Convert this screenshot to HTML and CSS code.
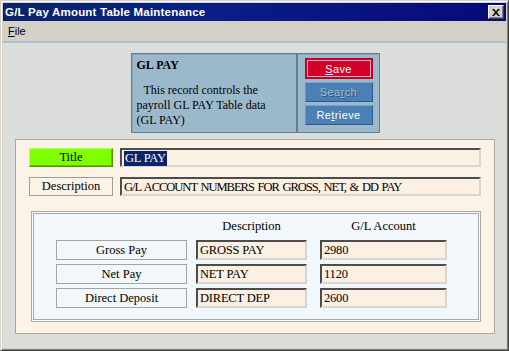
FILE: index.html
```html
<!DOCTYPE html>
<html lang="en">
<head>
    <meta charset="UTF-8">
    <title>G/L Pay Amount Table Maintenance</title>
    <link rel="stylesheet" href="styles.css">
</head>
<body>
    <div class="window">
        <div class="titlebar">
            <span class="title-text">G/L Pay Amount Table Maintenance</span>
            <button class="close-btn" title="Close">
                <svg width="8" height="7" viewBox="0 0 8 7">
                    <path d="M0 0h2l2 2.5L6 0h2L5 3.5 8 7H6L4 4.5 2 7H0l3-3.5z" fill="#000"/>
                </svg>
            </button>
        </div>

        <div class="menubar">
            <span class="menu-item"><u>F</u>ile</span>
        </div>

        <div class="client">
            <div class="record-box">
                <div class="record-info">
                    <h2>GL PAY</h2>
                    <p>This record controls the<br>payroll GL PAY Table data<br>(GL PAY)</p>
                </div>
                <div class="record-actions">
                    <button class="btn btn-save"><u>S</u>ave</button>
                    <button class="btn btn-disabled">Sea<u>r</u>ch</button>
                    <button class="btn">Re<u>t</u>rieve</button>
                </div>
            </div>

            <div class="main-panel">
                <div class="field-row">
                    <div class="lbl lbl-title">Title</div>
                    <div class="field field-wide"><span class="selected">GL PAY</span></div>
                </div>
                <div class="field-row">
                    <div class="lbl">Description</div>
                    <div class="field field-wide field-long">G/L ACCOUNT NUMBERS FOR GROSS, NET, &amp; DD PAY</div>
                </div>

                <div class="accounts">
                    <div class="accounts-grid">
                        <div></div>
                        <div class="col-head">Description</div>
                        <div class="col-head col-acct">G/L Account</div>

                        <div class="row-lbl">Gross Pay</div>
                        <div class="field">GROSS PAY</div>
                        <div class="field col-acct">2980</div>

                        <div class="row-lbl">Net Pay</div>
                        <div class="field">NET PAY</div>
                        <div class="field col-acct">1120</div>

                        <div class="row-lbl">Direct Deposit</div>
                        <div class="field">DIRECT DEP</div>
                        <div class="field col-acct">2600</div>
                    </div>
                </div>
            </div>
        </div>
    </div>
</body>
</html>
```

FILE: styles.css
```css
* {
    margin: 0;
    padding: 0;
    box-sizing: border-box;
}

body {
    font-family: 'Liberation Sans', Arial, sans-serif;
    background: #d4d0c8;
}

.window {
    width: 509px;
    height: 351px;
    display: flex;
    flex-direction: column;
    background: #d4d0c8;
    border: 1px solid;
    border-color: #d4d0c8 #404040 #404040 #d4d0c8;
    padding: 2px;
    box-shadow: inset 1px 1px #fff, inset -1px -1px #808080;
}

/* title bar */
.titlebar {
    height: 18px;
    display: flex;
    align-items: center;
    justify-content: space-between;
    padding: 0 2px 0 2px;
    background: linear-gradient(to right, #0a246a, #0a1f86 40%, #07087a);
}

.title-text {
    color: white;
    font-weight: bold;
    font-size: 11.5px;
    letter-spacing: 0.2px;
}

.close-btn {
    width: 16px;
    height: 14px;
    display: flex;
    align-items: center;
    justify-content: center;
    background: #d4d0c8;
    border: 1px solid;
    border-color: #fff #404040 #404040 #fff;
    box-shadow: inset -1px -1px #808080;
}

/* menu */
.menubar {
    height: 22px;
    display: flex;
    align-items: center;
    padding-left: 5px;
    background: #d4d0c8;
    border-bottom: 2px solid #a6c2d6;
}

.menu-item {
    font-size: 11px;
    color: #000;
}

/* client area */
.client {
    flex: 1;
    background: #dcdedb;
    padding: 10px 11px 0 12px;
    display: flex;
    flex-direction: column;
    align-items: center;
}

.record-box {
    width: 249px;
    height: 80px;
    display: flex;
    background: #9cb9cc;
    border: 1px solid #667f90;
    box-shadow: inset 1px 1px #8aa6b9;
}

.record-info {
    width: 166px;
    padding: 4px 0 0 5px;
    border-right: 2px solid #667f90;
    font-family: 'Liberation Serif', 'Times New Roman', serif;
    font-size: 12px;
    color: #000;
}

.record-info h2 {
    font-size: 12px;
    font-weight: bold;
    margin-bottom: 10px;
}

.record-info p {
    line-height: 15px;
    text-indent: 7px;
}

.record-actions {
    flex: 1;
    display: flex;
    flex-direction: column;
    gap: 3px;
    padding: 4px 6px 0 7px;
}

.btn {
    height: 20px;
    width: 68px;
    font-family: 'Liberation Sans', Arial, sans-serif;
    font-size: 11px;
    letter-spacing: 0.4px;
    color: white;
    background: #4a80b5;
    border: 1px solid;
    border-color: #73a3d2 #2d5b8a #2d5b8a #6496c8;
}

.btn-save {
    height: 21px;
    background: #d4002c;
    border-color: #b8001f;
    box-shadow: inset 0 0 0 1px #d4002c, inset 0 0 0 2px #eeaab6;
}

.btn-disabled {
    color: #a9bccd;
    text-shadow: 1px 1px #2f567e;
}

/* main panel */
.main-panel {
    align-self: stretch;
    height: 195px;
    margin-top: 6px;
    background: #fcf2e5;
    border: 1px solid #aca69e;
    padding: 8px 13px 0 13px;
}

.lbl, .field, .col-head, .row-lbl {
    font-family: 'Liberation Serif', 'Times New Roman', serif;
    font-size: 12.5px;
    color: #000;
}

.field-row {
    display: flex;
    gap: 7px;
    margin-bottom: 10px;
}

.lbl {
    width: 84px;
    height: 19px;
    display: flex;
    align-items: center;
    justify-content: center;
    border: 1px solid #9c9c9c;
    background: #fcf2e5;
}

.lbl-title {
    background: #80ff00;
    border-color: #b4ff6a #4c9600 #4c9600 #b4ff6a;
    box-shadow: inset -1px -1px #68c000;
}

.field {
    height: 20px;
    display: flex;
    align-items: center;
    padding: 1px 0 0 2px;
    background: #fbf0e2;
    border-top: 2px solid #4c4c4c;
    border-left: 2px solid #4c4c4c;
    border-right: 2px solid #d8d6d2;
    border-bottom: 2px solid #d8d6d2;
    white-space: nowrap;
    letter-spacing: -0.2px;
}

.field-wide {
    flex: 1;
    height: 19px;
}

.field-long {
    letter-spacing: -1px;
    word-spacing: 1.5px;
}

.selected {
    background: #0a246a;
    color: white;
    padding: 0 1px;
}

/* account grid */
.accounts {
    margin: 15px 0 0 2px;
    border: 1px solid #a9a9a9;
    box-shadow: inset 0 0 0 1px #fff, inset 0 0 0 2px #a9a9a9;
    background: #f2f7fb;
    padding: 6px 0 13px 24px;
}

.accounts-grid {
    display: grid;
    grid-template-columns: 131px 111px 131px;
    grid-template-rows: 18px 20px 20px 20px;
    column-gap: 9px;
    row-gap: 4px;
}

.col-head {
    text-align: center;
    line-height: 16px;
}

.col-acct {
    width: 127px;
    justify-self: end;
}

.row-lbl {
    display: flex;
    align-items: center;
    justify-content: center;
    border: 1px solid #a4a4a4;
}
```
